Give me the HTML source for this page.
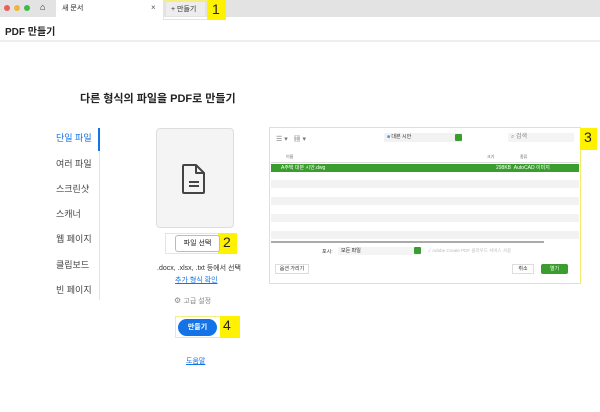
<!DOCTYPE html>
<html><head><meta charset="utf-8"><style>
*{margin:0;padding:0;box-sizing:border-box}
body{width:600px;height:412px;background:#fff;position:relative;overflow:hidden;font-family:"Liberation Sans","Noto Sans CJK KR",sans-serif;color:#222}
.a{position:absolute}
.y{background:#fff200;position:absolute}
.o{position:absolute;border:1.5px solid #f5ee80}
.side div{position:absolute;left:56px;font-size:9px;color:#444}
.row{position:absolute;left:271px;width:312px;height:8px}
</style></head><body>
<div class="a" style="left:0;top:0;width:600px;height:17px;background:#e3e3e3"></div>
<div class="a" style="left:4px;top:5px;width:6px;height:6px;border-radius:50%;background:#ec5f57"></div>
<div class="a" style="left:14px;top:5px;width:6px;height:6px;border-radius:50%;background:#f2b33a"></div>
<div class="a" style="left:24px;top:5px;width:6px;height:6px;border-radius:50%;background:#3bbd47"></div>
<div class="a" style="left:40px;top:2px;font-size:9px">⌂</div>
<div class="a" style="left:56px;top:0;width:107px;height:17px;background:#fff"></div>
<div class="a" style="left:62px;top:3px;font-size:7px">새 문서</div>
<div class="a" style="left:151px;top:3px;font-size:8px;color:#555">×</div>
<div class="o" style="left:163px;top:0;width:45px;height:20px"></div>
<div class="y" style="left:207px;top:0;width:19px;height:20px"></div>
<div class="a" style="left:166px;top:2px;width:39px;height:14px;background:#ededed"></div>
<div class="a" style="left:171px;top:4px;font-size:7px;color:#333">+ 만들기</div>
<div class="a" style="left:212px;top:1px;font-size:14px">1</div>
<div class="a" style="left:5px;top:23px;font-size:10px;font-weight:bold">PDF 만들기</div>
<div class="a" style="left:0;top:40px;width:600px;height:2px;background:#eee"></div>
<div class="a" style="left:80px;top:90px;font-size:11px;font-weight:bold;color:#222">다른 형식의 파일을 PDF로 만들기</div>
<div class="side">
<div style="top:131px;color:#1473e6">단일 파일</div>
<div style="top:157px">여러 파일</div>
<div style="top:182px">스크린샷</div>
<div style="top:207px">스캐너</div>
<div style="top:232px">웹 페이지</div>
<div style="top:258px">클립보드</div>
<div style="top:283px">빈 페이지</div>
</div>
<div class="a" style="left:99px;top:128px;width:1px;height:172px;background:#e3e3e3"></div>
<div class="a" style="left:98px;top:128px;width:2px;height:23px;background:#1473e6"></div>
<div class="a" style="left:156px;top:128px;width:78px;height:100px;background:#f4f4f4;border:1px solid #ddd;border-radius:4px"></div>
<svg class="a" style="left:181px;top:163px" width="26" height="32" viewBox="0 0 26 32"><path d="M3 2h12l8 8v19a1 1 0 0 1-1 1H3a1 1 0 0 1-1-1V3a1 1 0 0 1 1-1z M15 2v8h8 M8 19h10 M8 23h10" fill="none" stroke="#444" stroke-width="2" stroke-linejoin="round"/></svg>
<div class="o" style="left:165px;top:233px;width:54px;height:21px"></div>
<div class="y" style="left:218px;top:233px;width:19px;height:21px"></div>
<div class="a" style="left:175px;top:235px;width:45px;height:17px;background:#fff;border:1px solid #bbb;border-radius:3px;font-size:7px;text-align:center;line-height:15px">파일 선택</div>
<div class="a" style="left:223px;top:234px;font-size:14px">2</div>
<div class="a" style="left:157px;top:263px;font-size:7px;color:#333">.docx, .xlsx, .txt 등에서 선택</div>
<div class="a" style="left:175px;top:275px;font-size:7px;color:#1473e6;text-decoration:underline">추가 형식 확인</div>
<div class="a" style="left:174px;top:296px;font-size:8px;color:#888">⚙ <span style="font-size:7px">고급 설정</span></div>
<div class="o" style="left:175px;top:316px;width:46px;height:22px"></div>
<div class="y" style="left:220px;top:316px;width:20px;height:22px"></div>
<div class="a" style="left:178px;top:319px;width:39px;height:17px;background:#1473e6;border-radius:9px;color:#fff;font-size:7px;font-weight:bold;text-align:center;line-height:17px">만들기</div>
<div class="a" style="left:223px;top:317px;font-size:14px">4</div>
<div class="a" style="left:186px;top:356px;font-size:7px;color:#1473e6;text-decoration:underline">도움말</div>
<div class="a" style="left:269px;top:127px;width:312px;height:157px;border:1.5px solid #f3e96a;background:#fff"></div>
<div class="y" style="left:580px;top:128px;width:17px;height:22px"></div>
<div class="a" style="left:584px;top:129px;font-size:14px">3</div>
<div class="a" style="left:276px;top:134px;font-size:7px;color:#777">☰ ▾ &nbsp; ▦ ▾</div>
<div class="a" style="left:384px;top:133px;width:78px;height:9px;background:#f2f2f2;font-size:5px;line-height:9px;padding-left:3px;color:#333"><span style="color:#3d8ee0">■</span> 대본 시안</div>
<div class="a" style="left:455px;top:134px;width:7px;height:7px;background:#3a9e2e;border-radius:1px"></div>
<div class="a" style="left:508px;top:133px;width:66px;height:9px;background:#f4f4f4;font-size:6px;line-height:9px;padding-left:3px;color:#888">⌕ 검색</div>
<div class="a" style="left:271px;top:149px;width:308px;height:14px;border-bottom:1px solid #ddd;font-size:4px;color:#666"><span class="a" style="left:15px;top:5px">이름</span><span class="a" style="left:216px;top:5px">크기</span><span class="a" style="left:249px;top:5px">종류</span></div>
<div class="row" style="top:164px;width:308px;background:#3a9e2e;color:#fff;font-size:5px;line-height:8px;padding-left:10px">A주택 대본 시안.dwg<span style="position:absolute;left:225px">298KB &nbsp;AutoCAD 이미지</span></div>
<div class="row" style="top:180px;width:308px;background:#f2f2f2"></div>
<div class="row" style="top:197px;width:308px;background:#f2f2f2"></div>
<div class="row" style="top:214px;width:308px;background:#f2f2f2"></div>
<div class="row" style="top:231px;width:308px;background:#f2f2f2"></div>
<div class="a" style="left:271px;top:241px;width:273px;height:2px;background:#aaa"></div>
<div class="a" style="left:322px;top:248px;font-size:5px;color:#333">포시:</div>
<div class="a" style="left:338px;top:247px;width:82px;height:8px;background:#f4f4f4;font-size:5px;line-height:8px;padding-left:3px">모든 파일</div>
<div class="a" style="left:414px;top:247px;width:7px;height:7px;background:#3a9e2e;border-radius:1px"></div>
<div class="a" style="left:428px;top:248px;font-size:4.5px;color:#bbb">✓ Adobe Create PDF 클라우드 서비스 사용</div>
<div class="a" style="left:275px;top:264px;width:34px;height:10px;border:1px solid #ddd;font-size:5px;line-height:8px;text-align:center">옵션 가리기</div>
<div class="a" style="left:512px;top:264px;width:22px;height:10px;border:1px solid #ddd;font-size:5px;line-height:8px;text-align:center">취소</div>
<div class="a" style="left:541px;top:264px;width:27px;height:10px;background:#3a9e2e;border-radius:2px;color:#fff;font-size:5px;line-height:10px;text-align:center">열기</div>
</body></html>
